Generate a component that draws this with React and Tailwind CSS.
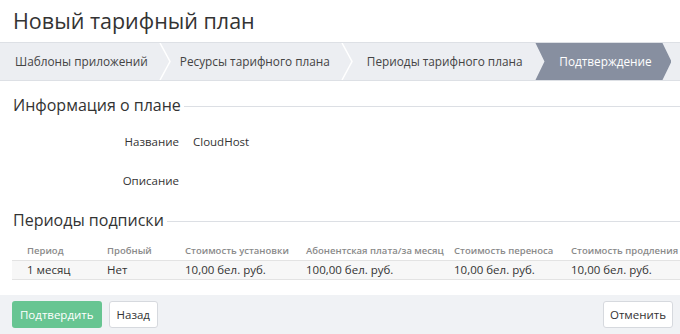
import React from 'react';

const steps = ['Шаблоны приложений', 'Ресурсы тарифного плана', 'Периоды тарифного плана'];

const columns = [
  { key: 'period', title: 'Период', w: 'w-[80px]' },
  { key: 'trial', title: 'Пробный', w: 'w-[78px]' },
  { key: 'setup', title: 'Стоимость установки', w: 'w-[121px]' },
  { key: 'fee', title: 'Абонентская плата/за месяц', w: 'w-[148px]' },
  { key: 'transfer', title: 'Стоимость переноса', w: 'w-[117px]' },
  { key: 'renew', title: 'Стоимость продления', w: 'w-[110px]' },
];

const rows = [
  {
    period: '1 месяц',
    trial: 'Нет',
    setup: '10,00 бел. руб.',
    fee: '100,00 бел. руб.',
    transfer: '10,00 бел. руб.',
    renew: '10,00 бел. руб.',
  },
];

const Chevron = () => (
  <svg width="14" height="37" viewBox="0 0 14 37" className="shrink-0">
    <polyline points="2,0 12,18.5 2,37" fill="none" stroke="#ffffff" strokeWidth="1.5" />
  </svg>
);

const SectionTitle = ({ children }) => (
  <div className="flex items-center pl-[13px]">
    <h2 className="text-[16px] leading-[24px] text-[#333] whitespace-nowrap">{children}</h2>
    <div className="flex-1 h-px bg-[#dcdfe4] ml-[3px] mt-[2px]" />
  </div>
);

export default function App() {
  return (
    <div className="w-[680px] h-[334px] bg-white flex flex-col overflow-hidden font-['Open_Sans',sans-serif] text-[#333]">
      <h1 className="px-[13px] pt-[3px] h-[42px] text-[21.5px] leading-[36px] text-[#333] whitespace-nowrap">Новый тарифный план</h1>

      {/* Wizard steps */}
      <div className="h-[39px] flex items-stretch bg-[#eceef2] border-y border-[#dde0e5] text-[11.8px] text-[#444] whitespace-nowrap">
        <div className="flex items-center pl-[15px] pr-[10px]">{steps[0]}</div>
        <Chevron />
        <div className="flex items-center pl-[8px] pr-[10px]">{steps[1]}</div>
        <Chevron />
        <div className="flex items-center pl-[13px] pr-[13px]">{steps[2]}</div>
        <div className="w-[136px] flex items-center justify-center pl-[4px] bg-[#878fa0] text-white [clip-path:polygon(0_0,calc(100%-9px)_0,100%_50%,calc(100%-9px)_100%,0_100%,9px_50%)]">
          Подтверждение
        </div>
      </div>

      <div className="pt-[12px]">
        <SectionTitle>Информация о плане</SectionTitle>
      </div>

      <div className="grid grid-cols-[179px_1fr] gap-x-[14px] text-[11.5px] mt-[18px]">
        <div className="text-right leading-[14px]">Название</div>
        <div className="leading-[14px]">CloudHost</div>
        <div className="text-right leading-[14px] mt-[25px]">Описание</div>
        <div className="mt-[25px]" />
      </div>

      <div className="pt-[20px]">
        <SectionTitle>Периоды подписки</SectionTitle>
      </div>

      <div className="ml-[12px] mt-[11px]">
        <div className="flex h-[18px] items-center pl-[15px] text-[9.5px] font-semibold text-[#8a8a8a] border-b border-[#e3e3e3] whitespace-nowrap">
          {columns.map((c) => (
            <div key={c.key} className={`${c.w} shrink-0`}>{c.title}</div>
          ))}
        </div>
        {rows.map((r, i) => (
          <div key={i} className="flex h-[19px] items-center pl-[15px] text-[11.5px] bg-[#f7f7f7] border-b border-[#e3e3e3] whitespace-nowrap">
            {columns.map((c) => (
              <div key={c.key} className={`${c.w} shrink-0`}>{r[c.key]}</div>
            ))}
          </div>
        ))}
      </div>

      <div className="mt-auto h-[39px] bg-[#f0f2f5] flex items-center px-[12px] text-[11.5px]">
        <button className="h-[27px] px-[8px] rounded-[3px] bg-[#67c592] text-white">Подтвердить</button>
        <button className="h-[27px] px-[7px] ml-[7px] rounded-[3px] bg-white border border-[#d6d9de] text-[#333]">Назад</button>
        <button className="h-[27px] px-[6px] ml-auto mr-[-5px] rounded-[3px] bg-white border border-[#d6d9de] text-[#333]">Отменить</button>
      </div>
    </div>
  );
}
